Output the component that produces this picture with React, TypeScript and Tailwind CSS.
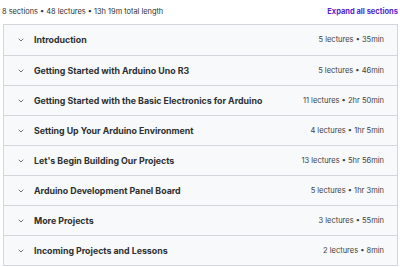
import { ChevronDown } from 'lucide-react'

const sections = [
  { title: 'Introduction', meta: '5 lectures • 35min' },
  { title: 'Getting Started with Arduino Uno R3', meta: '5 lectures • 46min' },
  { title: 'Getting Started with the Basic Electronics for Arduino', meta: '11 lectures • 2hr 50min' },
  { title: 'Setting Up Your Arduino Environment', meta: '4 lectures • 1hr 5min' },
  { title: "Let's Begin Building Our Projects", meta: '13 lectures • 5hr 56min' },
  { title: 'Arduino Development Panel Board', meta: '5 lectures • 1hr 3min' },
  { title: 'More Projects', meta: '3 lectures • 55min' },
  { title: 'Incoming Projects and Lessons', meta: '2 lectures • 8min' },
]

export default function App() {
  return (
    <div className="w-[400px] h-[267px] bg-white overflow-hidden font-['Inter',sans-serif] text-[#2d2f31]">
      <div className="flex items-center justify-between h-[24px] pl-[2px] pr-[2px]">
        <span className="text-[7.4px] text-[#2d2f31]">8 sections • 48 lectures • 13h 19m total length</span>
        <span className="text-[7.5px] font-bold text-[#5624d0]">Expand all sections</span>
      </div>
      <div className="mx-[3px] w-[395px] border border-[#d1d7dc]">
        {sections.map((s, i) => (
          <div
            key={s.title}
            className={`flex items-center h-[30px] bg-[#f7f9fa] pl-[13px] pr-[13px] ${i > 0 ? 'border-t border-[#d1d7dc]' : ''}`}
          >
            <ChevronDown size={8} strokeWidth={2} className="text-[#2d2f31] shrink-0" />
            <span className="ml-[9px] text-[8.8px] font-bold flex-1 truncate">{s.title}</span>
            <span className="text-[7.5px] text-[#3e4143]">{s.meta}</span>
          </div>
        ))}
      </div>
    </div>
  )
}
